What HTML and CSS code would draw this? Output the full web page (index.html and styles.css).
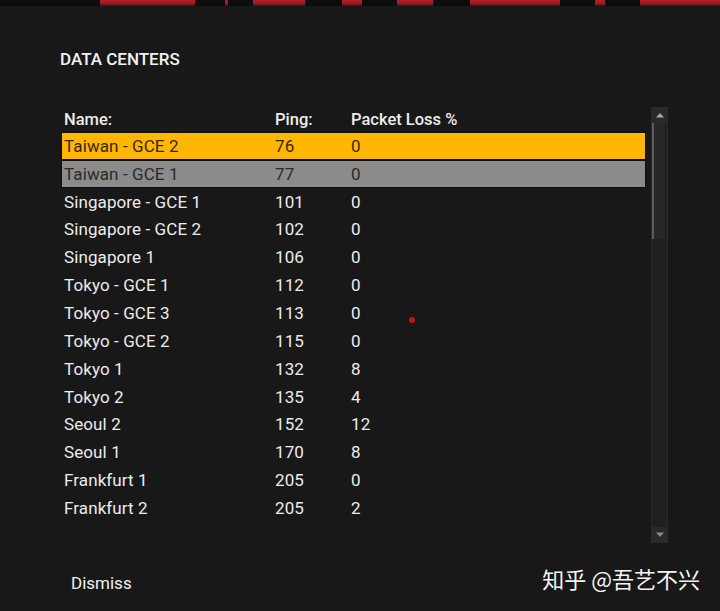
FILE: index.html
```html
<!DOCTYPE html>
<html>
<head>
<meta charset="utf-8">
<link rel="stylesheet" href="styles.css">
</head>
<body>
<div class="topbar">
  <span></span><span></span><span></span><span></span><span></span><span></span><span></span><span></span>
  <span></span><span></span><span></span><span></span><span></span><span></span><span></span><span></span>
</div>
<div class="panel">
  <h1 class="title">DATA CENTERS</h1>
  <div class="listwrap">
    <div class="table">
      <div class="row head"><span class="c1">Name:</span><span class="c2">Ping:</span><span class="c3">Packet Loss %</span></div>
      <div class="row sel"><span class="c1">Taiwan - GCE 2</span><span class="c2">76</span><span class="c3">0</span></div>
      <div class="row hover"><span class="c1">Taiwan - GCE 1</span><span class="c2">77</span><span class="c3">0</span></div>
      <div class="row"><span class="c1">Singapore - GCE 1</span><span class="c2">101</span><span class="c3">0</span></div>
      <div class="row"><span class="c1">Singapore - GCE 2</span><span class="c2">102</span><span class="c3">0</span></div>
      <div class="row"><span class="c1">Singapore 1</span><span class="c2">106</span><span class="c3">0</span></div>
      <div class="row"><span class="c1">Tokyo - GCE 1</span><span class="c2">112</span><span class="c3">0</span></div>
      <div class="row"><span class="c1">Tokyo - GCE 3</span><span class="c2">113</span><span class="c3">0</span></div>
      <div class="row"><span class="c1">Tokyo - GCE 2</span><span class="c2">115</span><span class="c3">0</span></div>
      <div class="row"><span class="c1">Tokyo 1</span><span class="c2">132</span><span class="c3">8</span></div>
      <div class="row"><span class="c1">Tokyo 2</span><span class="c2">135</span><span class="c3">4</span></div>
      <div class="row"><span class="c1">Seoul 2</span><span class="c2">152</span><span class="c3">12</span></div>
      <div class="row"><span class="c1">Seoul 1</span><span class="c2">170</span><span class="c3">8</span></div>
      <div class="row"><span class="c1">Frankfurt 1</span><span class="c2">205</span><span class="c3">0</span></div>
      <div class="row"><span class="c1">Frankfurt 2</span><span class="c2">205</span><span class="c3">2</span></div>
    </div>
    <div class="scrollbar">
      <div class="sb-btn"><svg width="10" height="6" viewBox="0 0 10 6"><path d="M1 5.5 L5 1 L9 5.5 Z" fill="#a8a8a8"/></svg></div>
      <div class="sb-track"><div class="sb-thumb"></div></div>
      <div class="sb-btn"><svg width="10" height="6" viewBox="0 0 10 6"><path d="M1 0.5 L5 5 L9 0.5 Z" fill="#8a8a8a"/></svg></div>
    </div>
  </div>
  <div class="footer">
    <span class="dismiss">Dismiss</span>
    <span class="watermark">知乎 @吾艺不兴</span>
  </div>
</div>
<div class="dot"></div>
</body>
</html>
```
FILE: styles.css
```css
html, body {
  margin: 0;
  padding: 0;
  background: #181818;
  width: 720px;
  height: 611px;
  overflow: hidden;
  font-family: Roboto, "Liberation Sans", sans-serif;
  color: #ececec;
}
.topbar {
  display: grid;
  grid-template-columns: 100px 95px 30px 3px 25px 52px 37px 20px 35px 36px 37px 90px 35px 10px 35px 80px;
  height: 6px;
  background: #0c0c0c;
}
.topbar span:nth-child(even) {
  background: linear-gradient(#b8202a 0, #8e1a22 4px, #3a0e10 6px);
}
.panel {
  padding-left: 60px;
}
.title {
  margin: 43px 0 0 0;
  font-size: 17px;
  font-weight: 500;
  letter-spacing: 0;
  line-height: 20px;
  color: #f2f2f2;
}
.listwrap {
  display: flex;
  margin-top: 38px;
}
.table {
  width: 585px;
  margin-left: 1px;
}
.row {
  display: flex;
  align-items: center;
  height: 27.85px;
  font-size: 17px;
  letter-spacing: 0.1px;
  box-sizing: border-box;
  border: 1px solid transparent;
}
.row.head {
  height: 25px;
  font-weight: 500;
  font-size: 16.5px;
  letter-spacing: 0;
  align-items: flex-end;
  padding-bottom: 2px;
}
.row.sel {
  background: #fdb703;
  color: #3a2500;
  border-color: #0e0e0e;
}
.row.hover {
  background: #8a8b8a;
  color: #2a2a2a;
  border-color: #0e0e0e;
}
.c1 { width: 211px; padding-left: 2px; }
.c2 { width: 76px; }
.c3 { flex: 1; }
.scrollbar {
  display: flex;
  flex-direction: column;
  width: 15px;
  height: 436px;
  margin-left: 5px;
  background: #222222;
  border-left: 1px solid #2b2b2b;
  border-right: 1px solid #2b2b2b;
}
.sb-btn {
  height: 16px;
  display: flex;
  align-items: center;
  justify-content: center;
  background: #2a2a2a;
}
.sb-track {
  flex: 1;
  background: #202020;
}
.sb-thumb {
  width: 13px;
  height: 116px;
  background: #272727;
  border-left: 2px solid #5a5a5a;
  box-sizing: border-box;
}
.footer {
  display: flex;
  justify-content: space-between;
  align-items: flex-start;
  margin-top: 19px;
  padding-right: 20px;
}
.dismiss {
  margin-left: 11px;
  margin-top: 11px;
  font-size: 17px;
  line-height: 20px;
  color: #f0f0f0;
}
.watermark {
  font-family: "Noto Sans CJK SC", "Noto Sans", sans-serif;
  font-size: 22px;
  line-height: 32px;
  color: #f4f4f4;
}
.dot {
  position: absolute;
  left: 409px;
  top: 317px;
  width: 6px;
  height: 6px;
  border-radius: 50%;
  background: #c4111a;
}
```
